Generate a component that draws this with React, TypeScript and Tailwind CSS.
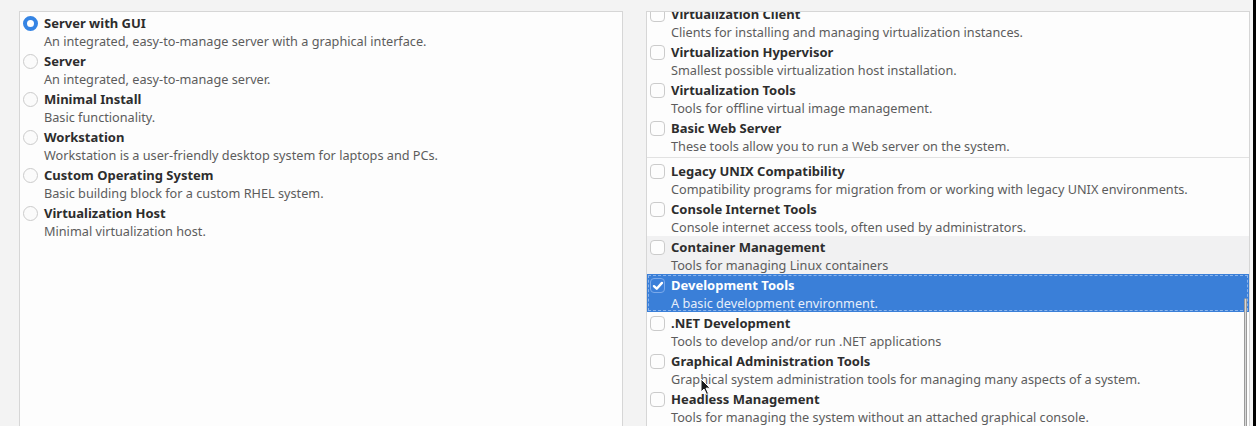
import type { ReactNode } from 'react';

type Item = { title: string; desc: string };

const ENVIRONMENTS: Item[] = [
  { title: 'Server with GUI', desc: 'An integrated, easy-to-manage server with a graphical interface.' },
  { title: 'Server', desc: 'An integrated, easy-to-manage server.' },
  { title: 'Minimal Install', desc: 'Basic functionality.' },
  { title: 'Workstation', desc: 'Workstation is a user-friendly desktop system for laptops and PCs.' },
  { title: 'Custom Operating System', desc: 'Basic building block for a custom RHEL system.' },
  { title: 'Virtualization Host', desc: 'Minimal virtualization host.' },
];

const ENV_ADDONS: Item[] = [
  { title: 'Virtualization Client', desc: 'Clients for installing and managing virtualization instances.' },
  { title: 'Virtualization Hypervisor', desc: 'Smallest possible virtualization host installation.' },
  { title: 'Virtualization Tools', desc: 'Tools for offline virtual image management.' },
  { title: 'Basic Web Server', desc: 'These tools allow you to run a Web server on the system.' },
];

const COMMON_ADDONS: Item[] = [
  { title: 'Legacy UNIX Compatibility', desc: 'Compatibility programs for migration from or working with legacy UNIX environments.' },
  { title: 'Console Internet Tools', desc: 'Console internet access tools, often used by administrators.' },
  { title: 'Container Management', desc: 'Tools for managing Linux containers' },
  { title: 'Development Tools', desc: 'A basic development environment.' },
  { title: '.NET Development', desc: 'Tools to develop and/or run .NET applications' },
  { title: 'Graphical Administration Tools', desc: 'Graphical system administration tools for managing many aspects of a system.' },
  { title: 'Headless Management', desc: 'Tools for managing the system without an attached graphical console.' },
];

function Radio({ on }: { on: boolean }) {
  return on ? (
    <span className="mt-[1px] block h-[15px] w-[15px] shrink-0 rounded-full border-[4px] border-[#3584e4] bg-white" />
  ) : (
    <span className="mt-[1px] block h-[15px] w-[15px] shrink-0 rounded-full border border-[#cbcbcb] bg-[#fbfbfb]" />
  );
}

function Check({ on }: { on: boolean }) {
  if (on) {
    return (
      <span className="mt-[1px] flex h-[15px] w-[15px] shrink-0 items-center justify-center rounded-[4px] border border-[#7aa9ea] bg-[#3b7fd9]">
        <svg viewBox="0 0 14 14" className="h-[12px] w-[12px]">
          <path d="M2.3 7.2 L5.5 10.2 L11.6 3.4" fill="none" stroke="#ffffff" strokeWidth="2.8" strokeLinecap="round" strokeLinejoin="round" />
        </svg>
      </span>
    );
  }
  return <span className="mt-[1px] block h-[15px] w-[15px] shrink-0 rounded-[4px] border border-[#cbcbcb] bg-[#fdfdfd]" />;
}

function Row({ control, item, tone = 'plain' }: { control: ReactNode; item: Item; tone?: 'plain' | 'hover' | 'selected' }) {
  const bg =
    tone === 'selected'
      ? 'bg-[#3a7fd8] outline-1 outline-dashed outline-[#8bb4ea] -outline-offset-2'
      : tone === 'hover'
        ? 'bg-[#f1f1f2]'
        : '';
  const title = tone === 'selected' ? 'text-white' : 'text-[#2d2d2d]';
  const desc = tone === 'selected' ? 'text-[#e6eefa]' : 'text-[#5c5c5c]';
  return (
    <div className={`flex h-[38px] items-start gap-[6px] pl-[3px] pt-[3px] ${bg}`}>
      {control}
      <div className="flex min-w-0 flex-col">
        <span className={`whitespace-nowrap text-[13px] font-bold leading-[17px] ${title}`}>{item.title}</span>
        <span className={`whitespace-nowrap text-[12.7px] leading-[18px] ${desc}`}>{item.desc}</span>
      </div>
    </div>
  );
}

function Cursor() {
  return (
    <svg viewBox="0 0 12 18" className="absolute left-[700px] top-[378px] h-[18px] w-[12px]">
      <path d="M1 1 L1 14 L4 11 L6.5 16.5 L8.5 15.5 L6 10.2 L10.2 10.2 Z" fill="#1c1c1c" stroke="#ffffff" strokeWidth="1" strokeLinejoin="round" />
    </svg>
  );
}

export default function App() {
  return (
    <div
      className="relative flex h-[426px] w-[1256px] overflow-hidden bg-[#f3f3f3]"
      style={{ fontFamily: '"Noto Sans", "Open Sans", sans-serif' }}
    >
      <div className="flex flex-1 gap-[23px] pl-[19px] pr-[3px] pt-[11px]">
        <section className="h-[440px] w-[604px] overflow-hidden border border-[#d6d6d6] bg-[#fdfdfd]">
          {ENVIRONMENTS.map((env, i) => (
            <Row key={env.title} item={env} control={<Radio on={i === 0} />} />
          ))}
        </section>

        <section className="relative h-[440px] w-[604px] overflow-hidden border border-[#d6d6d6] bg-[#fdfdfd]">
          <div className="-mt-[9px]">
            {ENV_ADDONS.map((a) => (
              <Row key={a.title} item={a} control={<Check on={false} />} />
            ))}
            <div className="py-[2px]">
              <div className="h-px bg-[#e2e2e2]" />
            </div>
            {COMMON_ADDONS.map((a) => (
              <Row
                key={a.title}
                item={a}
                control={<Check on={a.title === 'Development Tools'} />}
                tone={a.title === 'Development Tools' ? 'selected' : a.title === 'Container Management' ? 'hover' : 'plain'}
              />
            ))}
          </div>
          <div className="absolute right-[2px] top-[286px] h-[160px] w-[3px] rounded-full border border-[#9a9a9a] bg-[#d8d8d8]" />
        </section>
      </div>
      <div className="w-[4px] bg-black" />
      <Cursor />
    </div>
  );
}
